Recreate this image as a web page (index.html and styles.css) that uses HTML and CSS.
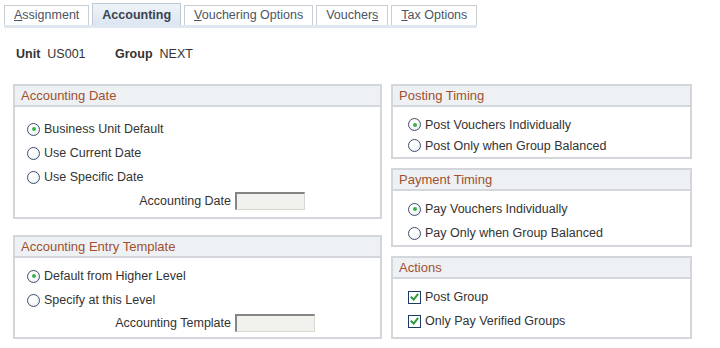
FILE: index.html
```html
<!DOCTYPE html>
<html lang="en">
  <head>
    <meta charset="UTF-8" />
    <title>Accounting</title>
    <link rel="stylesheet" href="styles.css">
  </head>
  <body>
    <div class="tabs">
      <div class="tab"><u>A</u>ssignment</div>
      <div class="tab active">Accounting</div>
      <div class="tab"><u>V</u>ouchering Options</div>
      <div class="tab">Voucher<u>s</u></div>
      <div class="tab"><u>T</u>ax Options</div>
    </div>

    <div class="keys">
      <b>Unit</b><span class="val">US001</span>
      <b>Group</b><span class="val">NEXT</span>
    </div>

    <div class="columns">
      <div class="col left">
        <div class="box acct-date">
          <div class="box-head">Accounting Date</div>
          <div class="box-body">
            <div class="opt"><span class="radio on"></span>Business Unit Default</div>
            <div class="opt"><span class="radio"></span>Use Current Date</div>
            <div class="opt"><span class="radio"></span>Use Specific Date</div>
            <div class="field"><label>Accounting Date</label><span class="input short"></span></div>
          </div>
        </div>
        <div class="box acct-tmpl">
          <div class="box-head">Accounting Entry Template</div>
          <div class="box-body">
            <div class="opt"><span class="radio on"></span>Default from Higher Level</div>
            <div class="opt"><span class="radio"></span>Specify at this Level</div>
            <div class="field"><label>Accounting Template</label><span class="input"></span></div>
          </div>
        </div>
      </div>

      <div class="col right">
        <div class="box posting">
          <div class="box-head">Posting Timing</div>
          <div class="box-body">
            <div class="opt"><span class="radio on"></span>Post Vouchers Individually</div>
            <div class="opt"><span class="radio"></span>Post Only when Group Balanced</div>
          </div>
        </div>
        <div class="box payment">
          <div class="box-head">Payment Timing</div>
          <div class="box-body">
            <div class="opt"><span class="radio on"></span>Pay Vouchers Individually</div>
            <div class="opt"><span class="radio"></span>Pay Only when Group Balanced</div>
          </div>
        </div>
        <div class="box actions">
          <div class="box-head">Actions</div>
          <div class="box-body">
            <div class="opt"><span class="check"></span>Post Group</div>
            <div class="opt"><span class="check"></span>Only Pay Verified Groups</div>
          </div>
        </div>
      </div>
    </div>
  </body>
</html>
```

FILE: styles.css
```css
html,
body {
  margin: 0;
  padding: 0;
  background: #fff;
  font-family: 'Liberation Sans', Arial, sans-serif;
  font-size: 12.5px;
  color: #333;
}
.tabs {
  display: flex;
  gap: 3px;
  margin: 3px 0 0 4px;
  width: 473px;
  border-bottom: 3px solid #dfe7f1;
  align-items: flex-end;
}
.tab {
  height: 19px;
  line-height: 19px;
  padding: 0 9px;
  border: 1px solid #c9ced4;
  border-bottom: 0;
  background: #fff;
  color: #4b5563;
  white-space: nowrap;
}
.tab u {
  text-decoration: underline;
}
.tab.active {
  height: 21px;
  line-height: 23px;
  font-weight: bold;
  color: #3a4250;
  background: linear-gradient(#eef3f8, #dce6f1);
  border-color: #bfc9d4;
}
.keys {
  margin: 18px 0 0 16px;
  height: 16px;
  line-height: 16px;
}
.keys b {
  color: #333;
}
.keys .val {
  margin: 0 26px 0 7px;
}
.columns {
  display: flex;
  gap: 9px;
  margin: 22px 0 0 13px;
}
.col {
  display: flex;
  flex-direction: column;
}
.left {
  width: 369px;
  gap: 16px;
}
.right {
  width: 301px;
  gap: 9px;
}
.box {
  border: 2px solid #d3d7dc;
}
.box-head {
  height: 19px;
  line-height: 19px;
  padding-left: 6px;
  background: #eef1f4;
  border-bottom: 2px solid #d3d7dc;
  color: #a0502f;
  font-size: 13px;
}
.box-body {
  padding-left: 12px;
  box-sizing: border-box;
}
.opt {
  display: flex;
  align-items: center;
  height: 24px;
}
.radio {
  width: 13px;
  height: 13px;
  box-sizing: border-box;
  border-radius: 50%;
  border: 1px solid #3e506a;
  background: radial-gradient(circle at 40% 35%, #fff 30%, #e2e5ea 100%);
  margin-right: 4px;
  position: relative;
}
.radio.on::after {
  content: '';
  position: absolute;
  left: 3.5px;
  top: 3.5px;
  width: 4px;
  height: 4px;
  border-radius: 50%;
  background: #37b24d;
}
.check {
  width: 13px;
  height: 13px;
  box-sizing: border-box;
  border: 1.5px solid #1d3b66;
  background: #fff;
  margin-right: 4px;
  position: relative;
}
.check::after {
  content: '';
  position: absolute;
  left: 2.5px;
  top: 0.5px;
  width: 3px;
  height: 6px;
  border: solid #2b9c3c;
  border-width: 0 2px 2px 0;
  transform: rotate(40deg);
}
.field {
  display: flex;
  align-items: center;
  height: 23px;
}
.field label {
  width: 204px;
  text-align: right;
  margin-right: 4px;
}
.input {
  display: inline-block;
  width: 80px;
  height: 18px;
  box-sizing: border-box;
  background: #f1f1ee;
  border: 1px solid #d8d8d2;
  border-top: 2px solid #858585;
  border-left: 2px solid #858585;
}
.input.short {
  width: 70px;
}

.acct-date .box-body {
  padding-top: 10px;
  height: 110px;
}
.acct-tmpl .box-body {
  padding-top: 6px;
  height: 79px;
}
.acct-tmpl .field {
  height: 22px;
}
.right .box-body {
  padding-left: 15px;
}
.posting .box-body {
  padding-top: 7px;
  height: 50px;
}
.posting .opt {
  height: 21px;
}
.payment .box-body {
  padding-top: 6px;
  height: 54px;
}
.actions .box-body {
  padding-top: 6px;
  height: 58px;
}
```
